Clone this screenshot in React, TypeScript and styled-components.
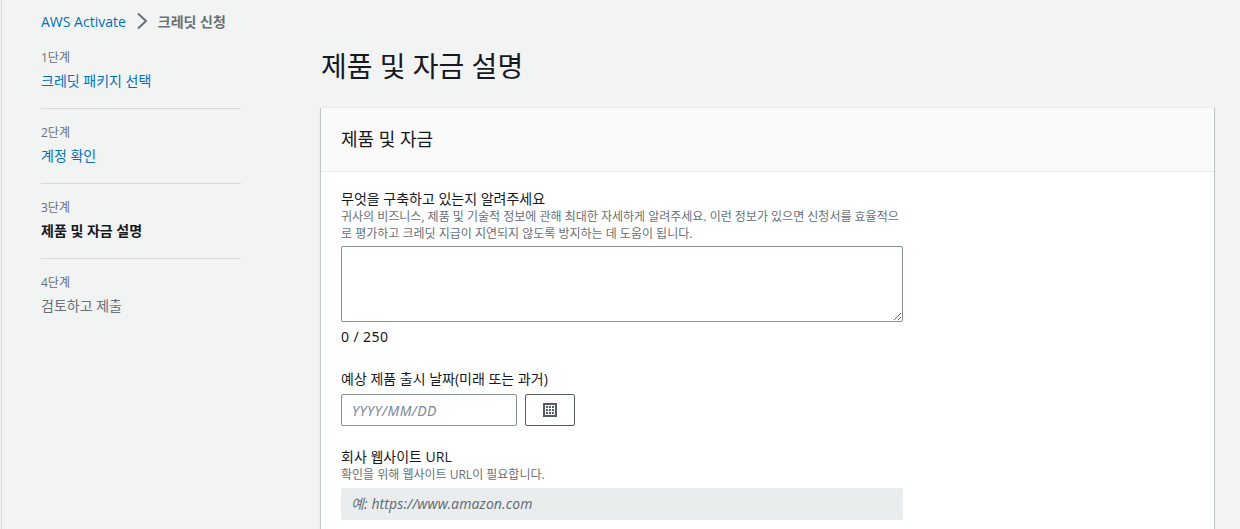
import React from "react";
import styled, { createGlobalStyle } from "styled-components";

const Global = createGlobalStyle`
  html, body { margin: 0; padding: 0; height: 529px; overflow: hidden; background: #f2f3f3; }
  body { font-family: "Open Sans", "Noto Sans CJK KR", sans-serif; color: #16191f; font-size: 14px; }
  * { box-sizing: border-box; }
`;

const Page = styled.div`
  height: 529px;
  overflow: hidden;
  margin-left: 1px;
  border-left: 1px solid #d5dbdb;
  padding-left: 39px;
  padding-right: 26px;
`;
const Crumbs = styled.nav`
  display: flex;
  align-items: center;
  height: 42px;
  font-size: 14px;
  font-weight: 700;
  color: #687078;
`;
const CrumbLink = styled.a`
  color: #0073bb;
  font-weight: 400;
`;
const CrumbIcon = styled.svg`
  width: 12px;
  height: 18px;
  margin: 0 10px 0 10px;
  fill: none;
  stroke: #687078;
  stroke-width: 2;
`;
const Columns = styled.div`
  display: grid;
  grid-template-columns: 200px 1fr;
  column-gap: 80px;
`;
const Steps = styled.ol`
  list-style: none;
  margin: 0;
  padding: 0;
`;
const Step = styled.li`
  height: 75px;
  padding-top: 15px;
  & + & { border-top: 1px solid #d5dbdb; }
  &:first-child { height: 66px; padding-top: 7px; }
`;
const StepNo = styled.div`
  font-size: 12px;
  line-height: 17px;
  color: #687078;
`;
const StepName = styled.div<{ $state: "link" | "current" | "off" }>`
  margin-top: 5px;
  font-size: 14px;
  line-height: 20px;
  font-weight: ${(p) => (p.$state === "current" ? 700 : 400)};
  color: ${(p) => (p.$state === "link" ? "#0073bb" : p.$state === "current" ? "#16191f" : "#687078")};
`;
const Main = styled.main`
  min-width: 0;
`;
const Title = styled.h1`
  margin: 0;
  height: 65px;
  padding-top: 2px;
  font-size: 28px;
  line-height: 44px;
  font-weight: 400;
`;
const Card = styled.section`
  background: #fff;
  box-shadow: 0 1px 1px 0 rgba(0, 28, 36, 0.3), 1px 1px 1px 0 rgba(0, 28, 36, 0.15), -1px 1px 1px 0 rgba(0, 28, 36, 0.15);
  border-top: 1px solid #eaeded;
`;
const CardHeader = styled.header`
  height: 64px;
  padding: 0 20px 3px;
  display: flex;
  align-items: center;
  background: #fafafa;
  border-bottom: 1px solid #eaeded;
  font-size: 18px;
`;
const CardBody = styled.div`
  padding: 17px 20px 40px;
  width: 602px;
`;
const Field = styled.div<{ $top?: number }>`
  margin-top: ${(p) => p.$top ?? 0}px;
`;
const Label = styled.label`
  display: block;
  font-size: 14px;
  line-height: 20px;
  color: #16191f;
`;
const Desc = styled.div`
  font-size: 12px;
  line-height: 16.5px;
  color: #687078;
`;
const Area = styled.textarea`
  display: block;
  width: 562px;
  height: 76px;
  margin-top: 4px;
  border: 1px solid #879596;
  border-radius: 2px;
  background: #fff;
`;
const Count = styled.div`
  margin-top: 6px;
  font-family: "Noto Sans", "Noto Sans CJK KR", sans-serif;
  font-size: 14px;
  line-height: 18px;
  letter-spacing: 0.4px;
  color: #16191f;
`;
const DateRow = styled.div`
  display: flex;
  gap: 8px;
  margin-top: 5px;
`;
const DateInput = styled.input`
  width: 176px;
  height: 32px;
  padding: 0 10px;
  border: 1px solid #879596;
  border-radius: 2px;
  background: #fff;
  font: italic 14px "Noto Sans", "Noto Sans CJK KR", sans-serif;
  letter-spacing: 0.4px;
  &::placeholder { color: #7d8998; opacity: 1; }
`;
const IconButton = styled.button`
  width: 50px;
  height: 32px;
  padding: 0;
  display: flex;
  align-items: center;
  justify-content: center;
  background: #fff;
  border: 1px solid #545b64;
  border-radius: 2px;
`;
const UrlInput = styled.input`
  display: block;
  width: 562px;
  height: 32px;
  margin-top: 4px;
  padding: 0 10px;
  border: 0;
  border-radius: 2px;
  background: #eaeded;
  font: italic 14px "Noto Sans", "Noto Sans CJK KR", sans-serif;
  letter-spacing: 0.1px;
  &::placeholder { color: #687078; opacity: 1; }
`;

const CalendarIcon = () => (
  <svg width="14" height="14" viewBox="0 0 14 14" aria-hidden="true">
    <rect width="14" height="14" fill="#545b64" />
    <rect x="2" y="2" width="10" height="10" fill="#fff" />
    {[3, 6, 9].flatMap((y) =>
      [3, 6, 9].map((x) => <rect key={`${x}-${y}`} x={x} y={y} width="2" height="2" fill="#545b64" />)
    )}
  </svg>
);

const steps: { no: string; name: string; state: "link" | "current" | "off" }[] = [
  { no: "1단계", name: "크레딧 패키지 선택", state: "link" },
  { no: "2단계", name: "계정 확인", state: "link" },
  { no: "3단계", name: "제품 및 자금 설명", state: "current" },
  { no: "4단계", name: "검토하고 제출", state: "off" },
];

export default function App() {
  return (
    <>
      <Global />
      <Page>
        <Crumbs>
          <CrumbLink>AWS Activate</CrumbLink>
          <CrumbIcon viewBox="0 0 12 18">
            <path d="M2 1.5l8 7.5-8 7.5" />
          </CrumbIcon>
          <span>크레딧 신청</span>
        </Crumbs>
        <Columns>
          <Steps>
            {steps.map((s) => (
              <Step key={s.no}>
                <StepNo>{s.no}</StepNo>
                <StepName $state={s.state}>{s.name}</StepName>
              </Step>
            ))}
          </Steps>
          <Main>
            <Title>제품 및 자금 설명</Title>
            <Card>
              <CardHeader>제품 및 자금</CardHeader>
              <CardBody>
                <Field>
                  <Label>무엇을 구축하고 있는지 알려주세요</Label>
                  <Desc>
                    귀사의 비즈니스, 제품 및 기술적 정보에 관해 최대한 자세하게 알려주세요. 이런 정보가 있으면 신청서를 효율적으로 평가하고 크레딧 지급이 지연되지 않도록 방지하는 데 도움이 됩니다.
                  </Desc>
                  <Area />
                  <Count>0 / 250</Count>
                </Field>
                <Field $top={23}>
                  <Label>예상 제품 출시 날짜(미래 또는 과거)</Label>
                  <DateRow>
                    <DateInput placeholder="YYYY/MM/DD" />
                    <IconButton>
                      <CalendarIcon />
                    </IconButton>
                  </DateRow>
                </Field>
                <Field $top={21}>
                  <Label>회사 웹사이트 URL</Label>
                  <Desc>확인을 위해 웹사이트 URL이 필요합니다.</Desc>
                  <UrlInput placeholder="예: https://www.amazon.com" />
                </Field>
              </CardBody>
            </Card>
          </Main>
        </Columns>
      </Page>
    </>
  );
}
